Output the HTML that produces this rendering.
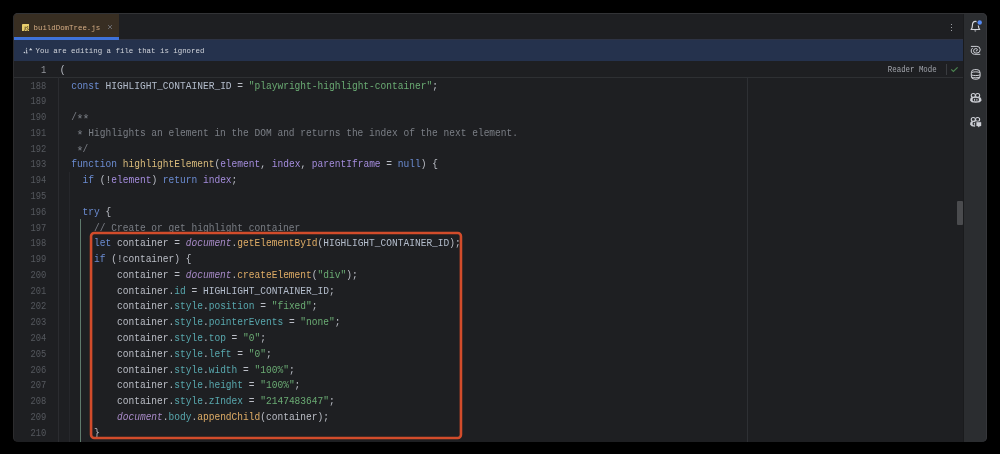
<!DOCTYPE html>
<html><head><meta charset="utf-8">
<style>
*{box-sizing:border-box;margin:0;padding:0}
html,body{width:1000px;height:454px;background:#000;overflow:hidden}
body{position:relative;font-family:"Liberation Mono",monospace}
.win{position:absolute;left:13px;top:13px;width:974px;height:429px;background:#1e1f22;border-radius:5px;overflow:hidden;will-change:transform}
.wborder{position:absolute;left:13px;top:13px;width:974px;height:429px;border-style:solid;border-width:1px 1px 0 1px;border-color:#323336 #35363a #000 #2c2c2e;border-radius:5px;pointer-events:none}
.abs{position:absolute}
.tab{left:0;top:0;width:106px;height:26px;background:#382e22}
.tabline{left:0;top:24px;width:106px;height:3px;background:#3f72d8}
.tabtxt{left:20.5px;top:11.2px;font-size:7.42px;line-height:9px;color:#d4ac84;white-space:pre}
.close{left:94.3px;top:10.2px;font-size:8.6px;line-height:9px;color:#8a8f96}
.jsicon{left:9px;top:10.8px;width:7.4px;height:7.4px;background:#e8c65e;border-radius:1px}
.dots{left:937.8px;width:1.3px;height:1.3px;background:#c8cacf;border-radius:1px}
.banner{left:0;top:25.5px;width:950px;height:22.5px;background:#25324d;border-top:1.5px solid #2e3344}
.bantxt{left:22.3px;top:33px;font-size:7.42px;line-height:9px;color:#d0d3da;white-space:pre}
.sticky{left:0;top:48px;width:950px;height:16.5px;background:#1e1f22;border-bottom:1px solid #2e3033}
.strip{left:950px;top:0;width:24px;height:429px;background:#2b2d30;border-left:1px solid #1a1b1d}
.gutsep{left:44.5px;top:64px;width:1px;height:370px;background:#2b2c30}
.margin{left:734px;top:64px;width:1px;height:370px;background:#2e3034}
.guide1{left:56px;top:159px;width:1px;height:270px;background:#26272b}
.guide2{left:67px;top:205.5px;width:1px;height:230px;background:#5f7a6c}
.thumb{left:944.4px;top:188.1px;width:5.6px;height:24px;background:#4a4b4e;border-radius:1px}
.ln{position:absolute;left:0;width:940px;height:15.784px;font-size:9.55px;line-height:15.784px;white-space:pre;transform:translateY(0.6px) scaleY(1.1);transform-origin:0 7.4px}
.gut{position:absolute;left:0;width:33.3px;text-align:right;color:#55585e;transform:scaleX(0.92);transform-origin:33px 0}
.code{position:absolute;left:46.7px;color:#bbbec6}
.k{color:#6b8cd2}
.f{color:#d9bb7c}
.fc{color:#dfac66}
.p{color:#a48cdc}
.s{color:#6aab73}
.c{color:#7a7e85}
.g{color:#a98bc9;font-style:italic}
.pr{color:#58a8ae}
.cn{color:#b3bccb}
.ast{position:relative;top:2.1px;display:inline-block;transform:scale(1.3)}
.reader{left:874.8px;top:53.4px;font-size:7.42px;line-height:9px;color:#a3a6ad;white-space:pre;transform:scaleY(1.12);transform-origin:0 4.5px}
.vdiv{left:932.6px;top:51px;width:1px;height:11px;background:#3a3c40}
.redbox{left:76.75px;top:219.25px;width:372.5px;height:207px;border:2.5px solid #d24c2b;border-radius:3.5px}
</style></head><body>
<div class="win">
  <div class="abs tab"></div>
  <svg class="abs" style="left:8.9px;top:10.9px" width="7.4" height="7.4" viewBox="0 0 7.4 7.4"><rect x="0" y="0" width="7.4" height="7.4" rx="0.8" fill="#e7cd6c"/><path d="M3.2 2.6 V5.6 C3.2 6.3 2.6 6.5 1.9 6.3" fill="none" stroke="#4a3a1c" stroke-width="0.85"/><path d="M6.3 2.9 C5.9 2.5 4.7 2.5 4.7 3.4 C4.7 4.3 6.4 4.3 6.4 5.4 C6.4 6.4 5 6.5 4.4 6" fill="none" stroke="#4a3a1c" stroke-width="0.85"/></svg>
  <div class="abs tabtxt">buildDomTree.js</div>
  <svg class="abs" style="left:93.5px;top:11px" width="6" height="6" viewBox="0 0 6 6"><path d="M1 1 L5 5 M5 1 L1 5" stroke="#7a7e85" stroke-width="0.75"/></svg>
  <div class="abs dots" style="top:10.8px"></div>
  <div class="abs dots" style="top:13.9px"></div>
  <div class="abs dots" style="top:17px"></div>
  <div class="abs banner"></div>
  <div class="abs tabline"></div>
  <div class="abs bantxt" style="left:22.5px;top:34.2px">You are editing a file that is ignored</div>
  <svg class="abs" style="left:9px;top:31.6px" width="12" height="10" viewBox="0 0 12 10"><circle cx="2.4" cy="7.6" r="0.75" fill="#cfd3dc"/><circle cx="4.6" cy="3.3" r="0.55" fill="#cfd3dc"/><path d="M3.8 4.9 H4.6 V7.8 M3.7 7.9 H5.6" fill="none" stroke="#cfd3dc" stroke-width="0.85"/><path d="M7 5.3 L8.7 3 L10.4 5.3 Z" fill="#cfd3dc"/></svg>
  <div class="abs sticky"></div>
  <div class="abs ln" style="top:48.6px"><span class="gut" style="color:#95989e">1</span><span class="code">(</span></div>
  <div class="abs reader">Reader Mode</div>
  <div class="abs vdiv"></div>
  <svg class="abs" style="left:937px;top:53px" width="9" height="7" viewBox="0 0 9 7"><path d="M1.2 3.4 L3.4 5.4 L7.6 1.4" fill="none" stroke="#4b8450" stroke-width="1.2"/></svg>
  <div class="abs gutsep"></div>
  <div class="abs margin"></div>
  <div class="abs guide1"></div>
  <div class="abs guide2"></div>
<div class="ln" style="top:64.500px"><span class="gut">188</span><span class="code">  <span class="k">const</span> <span class="cn">HIGHLIGHT_CONTAINER_ID</span> = <span class="s">&quot;playwright-highlight-container&quot;</span>;</span></div>
<div class="ln" style="top:80.284px"><span class="gut">189</span><span class="code"></span></div>
<div class="ln" style="top:96.068px"><span class="gut">190</span><span class="code">  <span class="c">/</span><span class="c ast">*</span><span class="c ast">*</span></span></div>
<div class="ln" style="top:111.852px"><span class="gut">191</span><span class="code">   <span class="c ast">*</span><span class="c"> Highlights an element in the DOM and returns the index of the next element.</span></span></div>
<div class="ln" style="top:127.636px"><span class="gut">192</span><span class="code">   <span class="c ast">*</span><span class="c">/</span></span></div>
<div class="ln" style="top:143.420px"><span class="gut">193</span><span class="code">  <span class="k">function</span> <span class="f">highlightElement</span>(<span class="p">element</span>, <span class="p">index</span>, <span class="p">parentIframe</span> = <span class="k">null</span>) {</span></div>
<div class="ln" style="top:159.204px"><span class="gut">194</span><span class="code">    <span class="k">if</span> (!<span class="p">element</span>) <span class="k">return</span> <span class="p">index</span>;</span></div>
<div class="ln" style="top:174.988px"><span class="gut">195</span><span class="code"></span></div>
<div class="ln" style="top:190.772px"><span class="gut">196</span><span class="code">    <span class="k">try</span> {</span></div>
<div class="ln" style="top:206.556px"><span class="gut">197</span><span class="code">      <span class="c">// Create or get highlight container</span></span></div>
<div class="ln" style="top:222.340px"><span class="gut">198</span><span class="code">      <span class="k">let</span> container = <span class="g">document</span>.<span class="fc">getElementById</span>(<span class="cn">HIGHLIGHT_CONTAINER_ID</span>);</span></div>
<div class="ln" style="top:238.124px"><span class="gut">199</span><span class="code">      <span class="k">if</span> (!container) {</span></div>
<div class="ln" style="top:253.908px"><span class="gut">200</span><span class="code">          container = <span class="g">document</span>.<span class="fc">createElement</span>(<span class="s">&quot;div&quot;</span>);</span></div>
<div class="ln" style="top:269.692px"><span class="gut">201</span><span class="code">          container.<span class="pr">id</span> = <span class="cn">HIGHLIGHT_CONTAINER_ID</span>;</span></div>
<div class="ln" style="top:285.476px"><span class="gut">202</span><span class="code">          container.<span class="pr">style</span>.<span class="pr">position</span> = <span class="s">&quot;fixed&quot;</span>;</span></div>
<div class="ln" style="top:301.260px"><span class="gut">203</span><span class="code">          container.<span class="pr">style</span>.<span class="pr">pointerEvents</span> = <span class="s">&quot;none&quot;</span>;</span></div>
<div class="ln" style="top:317.044px"><span class="gut">204</span><span class="code">          container.<span class="pr">style</span>.<span class="pr">top</span> = <span class="s">&quot;0&quot;</span>;</span></div>
<div class="ln" style="top:332.828px"><span class="gut">205</span><span class="code">          container.<span class="pr">style</span>.<span class="pr">left</span> = <span class="s">&quot;0&quot;</span>;</span></div>
<div class="ln" style="top:348.612px"><span class="gut">206</span><span class="code">          container.<span class="pr">style</span>.<span class="pr">width</span> = <span class="s">&quot;100%&quot;</span>;</span></div>
<div class="ln" style="top:364.396px"><span class="gut">207</span><span class="code">          container.<span class="pr">style</span>.<span class="pr">height</span> = <span class="s">&quot;100%&quot;</span>;</span></div>
<div class="ln" style="top:380.180px"><span class="gut">208</span><span class="code">          container.<span class="pr">style</span>.<span class="pr">zIndex</span> = <span class="s">&quot;2147483647&quot;</span>;</span></div>
<div class="ln" style="top:395.964px"><span class="gut">209</span><span class="code">          <span class="g">document</span>.<span class="pr">body</span>.<span class="fc">appendChild</span>(container);</span></div>
<div class="ln" style="top:411.748px"><span class="gut">210</span><span class="code">      }</span></div>

  <svg class="abs" style="left:0;top:0" width="974" height="429"><rect x="78.05" y="219.95" width="369.9" height="205.05" rx="3.2" fill="none" stroke="#d24c2b" stroke-width="2.6"/></svg>
  <div class="abs thumb"></div>
  <div class="abs strip"></div>

  <svg class="abs" style="left:953px;top:4px" width="20" height="20" viewBox="0 0 20 20">
    <path d="M5.1 12.5 C6.1 11.6 6.4 10.6 6.4 8.6 C6.4 5.9 7.8 4.4 9.4 4.4 C11 4.4 12.4 5.9 12.4 8.6 C12.4 10.6 12.7 11.6 13.7 12.5 Z" fill="none" stroke="#d4d6dc" stroke-width="1.15" stroke-linejoin="round"/>
    <path d="M8.3 13.6 A1 1 0 0 0 10.3 13.6 Z" fill="#d4d6dc"/>
    <circle cx="13.7" cy="5.5" r="3.3" fill="#2b2d30"/>
    <circle cx="13.7" cy="5.5" r="2.2" fill="#548af7"/>
  </svg>
  <svg class="abs" style="left:953px;top:27px" width="20" height="20" viewBox="0 0 20 20" fill="none" stroke="#ced0d6" stroke-width="1" stroke-linecap="round">
    <path d="M5.3 6.4 H10.9 A3.3 3.3 0 0 1 10.9 13 H9.8 A2.2 2.2 0 0 1 9.8 8.6 H10.2 A1.2 1.2 0 0 1 10.2 11"/>
    <path d="M6.4 8.1 A3.5 3.5 0 0 0 8.8 14.3 H13.9"/>
  </svg>
  <svg class="abs" style="left:953px;top:51px" width="20" height="20" viewBox="0 0 20 20" fill="none" stroke="#ced0d6" stroke-width="1">
    <rect x="5.3" y="5.6" width="8.8" height="9.6" rx="3.2"/>
    <path d="M5.5 8.6 C7.5 7.6 11.9 7.6 13.9 8.6"/>
    <path d="M5.3 10.9 C7.5 11.8 11.9 11.8 14.1 10.9"/>
    <path d="M5.3 13.1 C7.5 14 11.9 14 14.1 13.1"/>
  </svg>
  <svg class="abs" style="left:953px;top:75px" width="20" height="20" viewBox="0 0 20 20">
    <path d="M5.6 9.2 C4.5 9.9 4.1 11.1 4.2 12.3 C4.5 14 6.4 14.8 9.8 14.8 C13.2 14.8 15.1 14 15.4 12.3 C15.5 11.1 15.1 9.9 14 9.2 Z" fill="#ced0d6"/>
    <rect x="6.6" y="10.1" width="6.3" height="3.2" rx="1.2" fill="#2b2d30"/>
    <rect x="8.1" y="10.8" width="1" height="2" fill="#ced0d6"/>
    <rect x="10.4" y="10.8" width="1" height="2" fill="#ced0d6"/>
    <ellipse cx="7.3" cy="7.4" rx="2.05" ry="1.95" fill="#2b2d30" stroke="#ced0d6" stroke-width="1.1"/>
    <ellipse cx="11.6" cy="7.4" rx="2.05" ry="1.95" fill="#2b2d30" stroke="#ced0d6" stroke-width="1.1"/>
  </svg>
  <svg class="abs" style="left:953px;top:99px" width="20" height="20" viewBox="0 0 20 20">
    <path d="M5.6 9.2 C4.5 9.9 4.1 11.1 4.2 12.3 C4.5 14 6.4 14.8 9.2 14.8 L9.6 9.2 Z" fill="#ced0d6"/>
    <rect x="6.6" y="10.1" width="3" height="3.2" rx="1" fill="#2b2d30"/>
    <rect x="7.9" y="10.8" width="1" height="2" fill="#ced0d6"/>
    <ellipse cx="7.3" cy="7.4" rx="2.05" ry="1.95" fill="#2b2d30" stroke="#ced0d6" stroke-width="1.1"/>
    <ellipse cx="11.6" cy="7.4" rx="2.05" ry="1.95" fill="#2b2d30" stroke="#ced0d6" stroke-width="1.1"/>
    <path d="M9.4 9.4 H16 V14.8 H14 L12.8 16.3 L11.6 14.8 H9.4 Z" fill="#2b2d30"/>
    <path d="M10.6 10.3 H15 V13.9 H13.6 L12.8 15.2 L12 13.9 H10.6 Z" fill="#ced0d6" stroke="#ced0d6" stroke-width="0.4" stroke-linejoin="round"/>
  </svg>
</div>
<div class="wborder"></div>
</body></html>
